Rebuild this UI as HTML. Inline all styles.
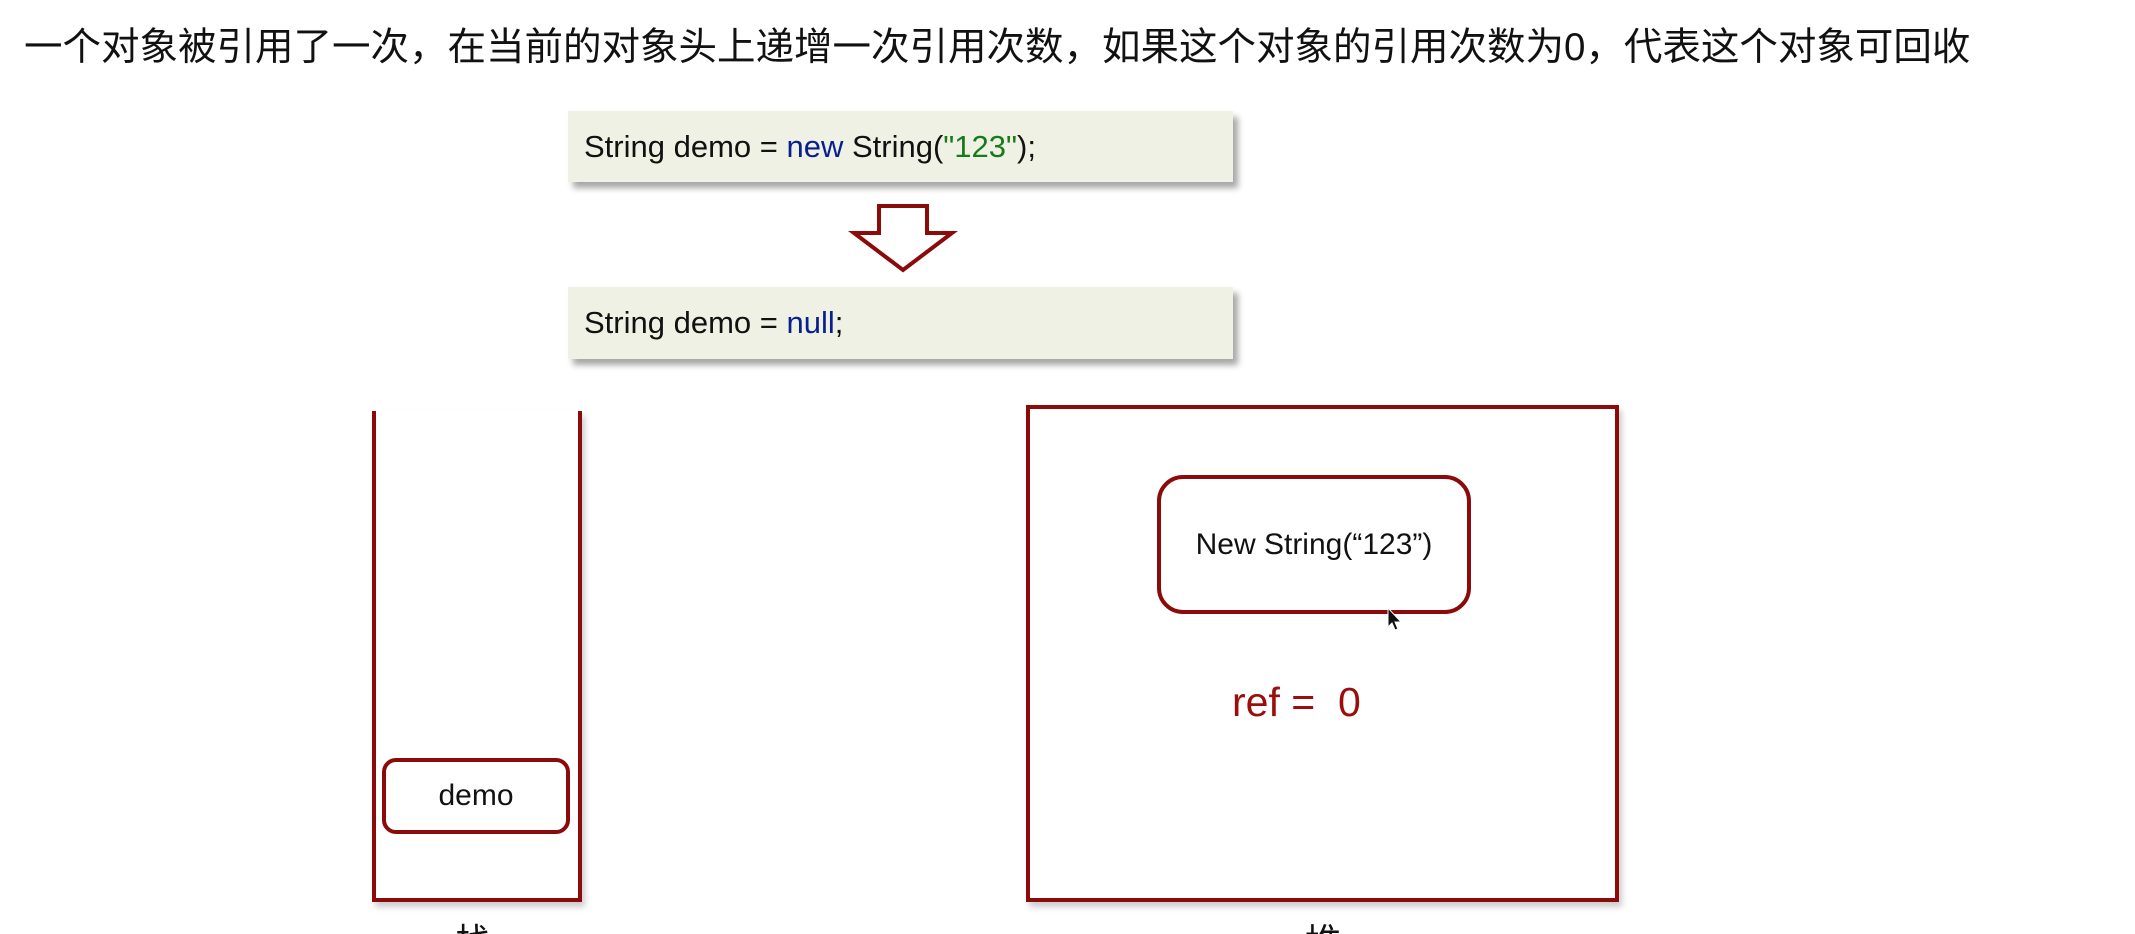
<!DOCTYPE html>
<html><head><meta charset="utf-8"><style>
html,body{margin:0;padding:0;background:#fff;width:2135px;height:934px;overflow:hidden;position:relative;font-family:"Liberation Sans","Noto Sans CJK SC",sans-serif;}
.abs{position:absolute;}
.title{left:24px;top:20px;font-size:38.5px;line-height:56px;color:#111;white-space:nowrap;}
.code{background:#eef1e3;box-shadow:5px 6px 6px rgba(0,0,0,0.35);font-size:31px;color:#111;box-sizing:border-box;padding-left:16px;display:flex;align-items:center;}
.kw{color:#0a1f8f}.str{color:#197a19}
.rb{border:4px solid #8b0a0a;border-radius:18px;box-sizing:border-box;display:flex;align-items:center;justify-content:center;color:#111;}
</style></head><body>
<div class="abs title">一个对象被引用了一次，在当前的对象头上递增一次引用次数，如果这个对象的引用次数为0，代表这个对象可回收</div>

<div class="abs code" style="left:568px;top:111px;width:665px;height:71px;">String demo = <span class="kw">&nbsp;new&nbsp;</span>String(<span class="str">"123"</span>);</div>

<svg class="abs" style="left:846px;top:200px" width="112" height="76" viewBox="0 0 112 76">
<path d="M33 6 H81 V33 H106 L57 70 L8 33 H33 Z" fill="#fff" stroke="#8b0a0a" stroke-width="4" stroke-linejoin="miter"/>
</svg>

<div class="abs code" style="left:568px;top:287px;width:665px;height:72px;">String demo = <span class="kw">&nbsp;null</span>;</div>

<div class="abs" style="left:372px;top:411px;width:210px;height:491px;border:4px solid #8b0a0a;border-top:none;box-sizing:border-box;box-shadow:3px 5px 6px rgba(0,0,0,0.2);"></div>
<div class="abs rb" style="left:382px;top:758px;width:188px;height:76px;font-size:30px;border-radius:14px;">demo</div>

<div class="abs" style="left:1026px;top:405px;width:593px;height:497px;border:4px solid #8b0a0a;box-sizing:border-box;box-shadow:3px 5px 6px rgba(0,0,0,0.2);"></div>
<div class="abs rb" style="left:1157px;top:475px;width:314px;height:139px;font-size:30px;border-radius:26px;">New String(“123”)</div>
<div class="abs" style="left:1232px;top:679px;font-size:41px;color:#9a0e0e;white-space:nowrap;">ref =&nbsp; 0</div>

<svg class="abs" style="left:1386px;top:606px" width="18" height="26" viewBox="0 0 18 26"><path d="M2 2 V21 L6 17 L9 24 L12 23 L9 16 L15 16 Z" fill="#111" stroke="#fff" stroke-width="1"/></svg>

<div class="abs" style="left:455px;top:922px;font-size:36px;color:#111;line-height:40px;">栈</div>
<div class="abs" style="left:1305px;top:922px;font-size:36px;color:#111;line-height:40px;">堆</div>
</body></html>
